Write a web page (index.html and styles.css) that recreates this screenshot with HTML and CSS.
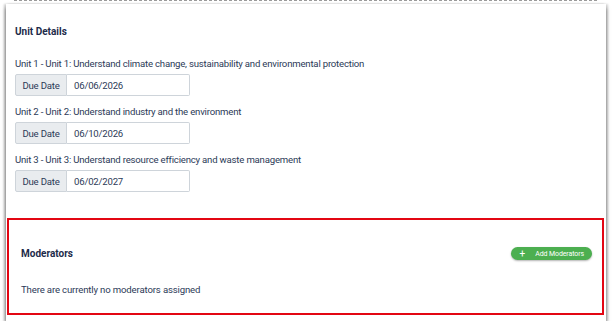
FILE: index.html
```html
<!DOCTYPE html>
<html lang="en">
<head>
    <meta charset="UTF-8">
    <meta name="viewport" content="width=device-width, initial-scale=1.0">
    <title>Unit Details</title>
    <link rel="stylesheet" href="styles.css">
</head>
<body>
    <div class="divider"></div>
    <div class="card">
        <h3 class="section-title">Unit Details</h3>

        <div class="unit-list">
            <div class="unit">
                <div class="unit-name">Unit 1 - Unit 1: Understand climate change, sustainability and environmental protection</div>
                <div class="input-group">
                    <span class="input-label">Due Date</span>
                    <span class="input-value">06/06/2026</span>
                </div>
            </div>
            <div class="unit">
                <div class="unit-name">Unit 2 - Unit 2: Understand industry and the environment</div>
                <div class="input-group">
                    <span class="input-label">Due Date</span>
                    <span class="input-value">06/10/2026</span>
                </div>
            </div>
            <div class="unit">
                <div class="unit-name">Unit 3 - Unit 3: Understand resource efficiency and waste management</div>
                <div class="input-group">
                    <span class="input-label">Due Date</span>
                    <span class="input-value">06/02/2027</span>
                </div>
            </div>
        </div>

        <div class="moderators">
            <div class="moderators-head">
                <h3 class="section-title">Moderators</h3>
                <button class="btn-add"><span class="plus">+</span>Add Moderators</button>
            </div>
            <p class="empty-note">There are currently no moderators assigned</p>
        </div>
    </div>
</body>
</html>
```

FILE: styles.css
```css
body {
  margin: 0;
  background: #fff;
  font-family: Roboto, "Liberation Sans", sans-serif;
  color: #2c3a57;
}

.divider {
  margin: 0 16px 0 14px;
  border-top: 1px dashed #9a9a9a;
}

.card {
  margin: 3px 7px 0 6px;
  padding: 22px 0 6px 0;
  background: #fff;
  box-shadow: 0 4px 4px rgba(0, 0, 0, 0.55), -2px 0 2px rgba(0, 0, 0, 0.18), 2px 0 2px rgba(0, 0, 0, 0.15);
}

.section-title {
  margin: 0;
  font-size: 10px;
  font-weight: 700;
  color: #1d2b4a;
}

.card > .section-title {
  padding-left: 9px;
}

.unit-list {
  display: flex;
  flex-direction: column;
  gap: 10px;
  padding: 21px 0 0 9px;
  letter-spacing: -0.2px;
}

.unit-name {
  font-size: 9.6px;
  line-height: 12px;
  margin-bottom: 4px;
}

.input-group {
  display: flex;
  width: 175px;
  height: 22px;
  font-size: 9.6px;
}

.input-label {
  display: flex;
  align-items: center;
  justify-content: center;
  width: 50px;
  background: #e9ecef;
  border: 1px solid #ced4da;
  border-radius: 2px 0 0 2px;
}

.input-value {
  display: flex;
  align-items: center;
  flex: 1;
  padding-left: 7px;
  border: 1px solid #ced4da;
  border-left: none;
  border-radius: 0 2px 2px 0;
}

.moderators {
  margin: 26px 2px 0 1px;
  padding: 27px 10px 18px 12px;
  border: 2px solid #e30613;
}

.moderators-head {
  display: flex;
  align-items: center;
  justify-content: space-between;
}

.btn-add {
  display: flex;
  align-items: center;
  height: 13px;
  padding: 0 8px 0 9px;
  border: none;
  border-radius: 7px;
  background: #4caf50;
  color: #fff;
  font-family: Roboto, "Liberation Sans", sans-serif;
  font-size: 7px;
  letter-spacing: -0.1px;
  box-shadow: 0 1px 2px rgba(0, 0, 0, 0.3);
}

.plus {
  font-size: 10px;
  margin-right: 10px;
}

.empty-note {
  margin: 24px 0 0 0;
  font-size: 9.6px;
  letter-spacing: -0.15px;
}
```
